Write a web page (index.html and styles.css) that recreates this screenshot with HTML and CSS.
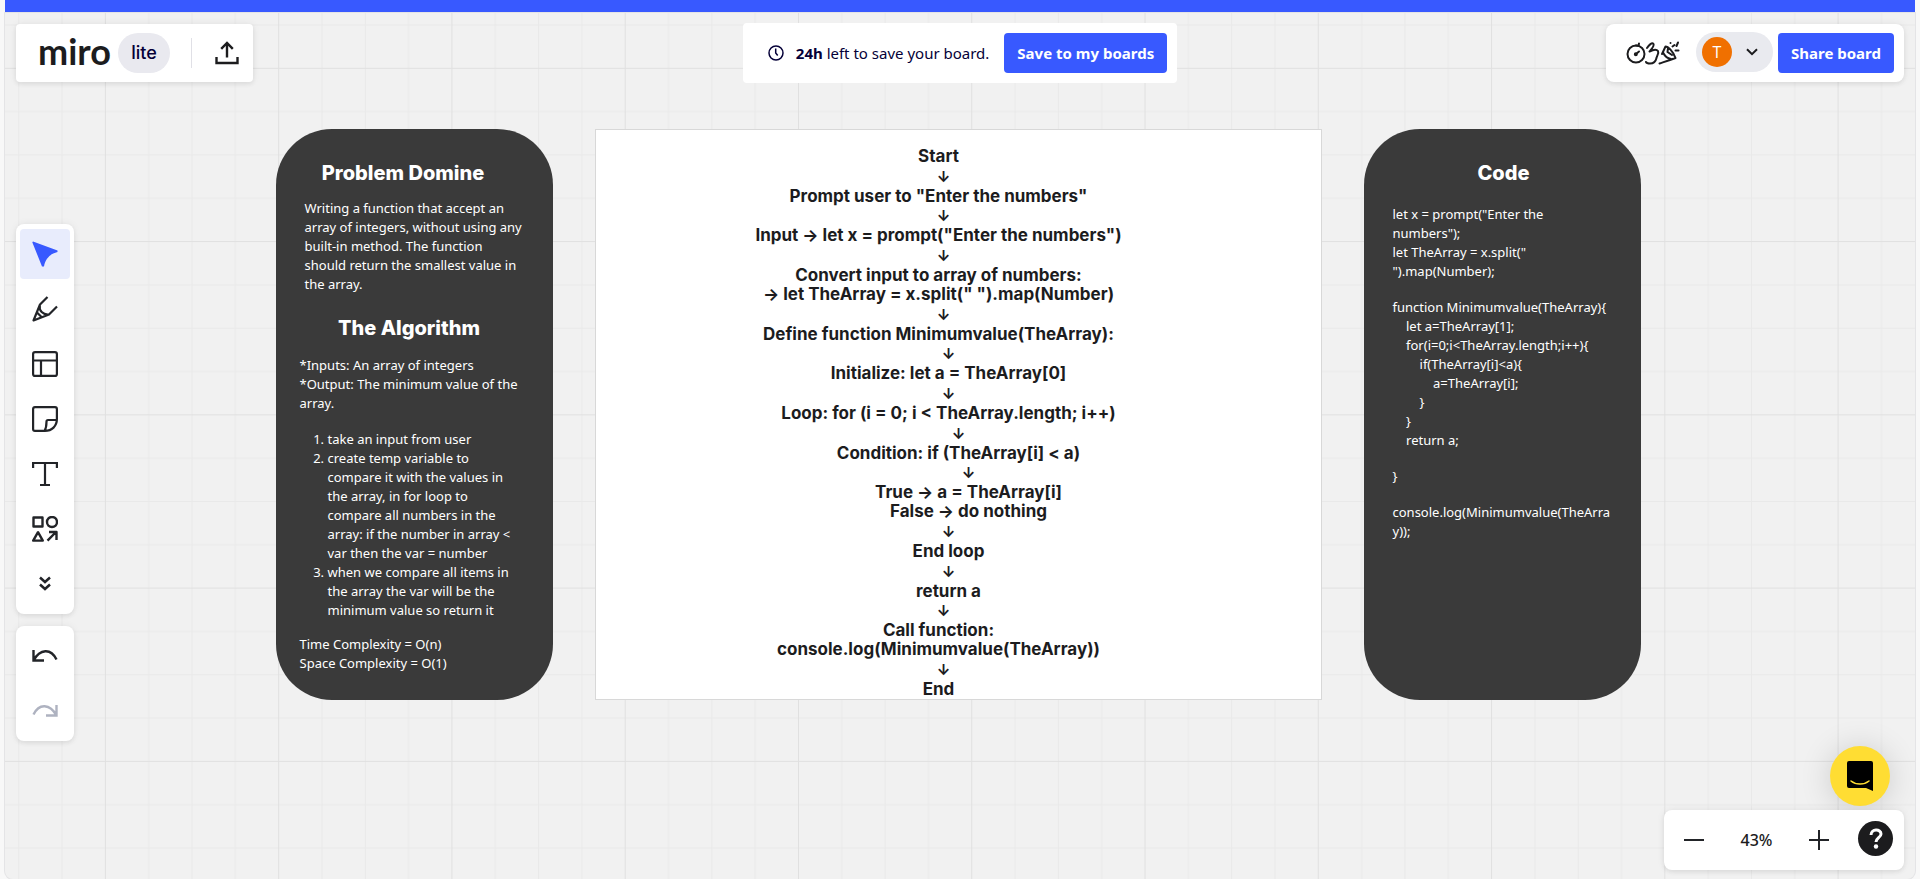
FILE: index.html
```html
<!DOCTYPE html>
<html lang="en">
<head>
<meta charset="utf-8">
<meta name="viewport" content="width=device-width, initial-scale=1">
<title>Miro lite board</title>
<link rel="stylesheet" href="styles.css">
</head>
<body>
<div class="frame">
  <div class="strip"></div>
  <div class="board">
    <svg class="grid" aria-hidden="true">
      <defs>
        <pattern id="cells" x="99.9" y="54.8" width="173.27" height="173.27" patternUnits="userSpaceOnUse">
          <path d="M43.8 0V173.3M87.1 0V173.3M130.4 0V173.3M0 43.8H173.3M0 87.1H173.3M0 130.4H173.3" stroke="#e9e9e9" stroke-width="1"/>
          <path d="M.5 0V173.3M0 .5H173.3" stroke="#e0e0e0" stroke-width="1"/>
        </pattern>
      </defs>
      <rect width="100%" height="100%" fill="url(#cells)"/>
    </svg>

    <main class="canvas">
      <section class="shape">
        <h2 class="shape-title title-problem">Problem Domine</h2>
        <p class="note note-problem">Writing a function that accept an<br>array of integers, without using any<br>built-in method. The function<br>should return the smallest value in<br>the array.</p>
        <h2 class="shape-title title-algorithm">The Algorithm</h2>
        <p class="note">*Inputs: An array of integers<br>*Output: The minimum value of the<br>array.</p>
        <ol class="note steps">
          <li>take an input from user</li>
          <li>create temp variable to<br>compare it with the values in<br>the array, in for loop to<br>compare all numbers in the<br>array: if the number in array &lt;<br>var then the var = number</li>
          <li>when we compare all items in<br>the array the var will be the<br>minimum value so return it</li>
        </ol>
        <p class="note">Time Complexity = O(n)<br>Space Complexity = O(1)</p>
      </section>

      <section class="sheet">
        <p>Start</p>
        <p class="arrow">↓</p>
        <p>Prompt user to "Enter the numbers"</p>
        <p class="arrow">↓</p>
        <p>Input → let x = prompt("Enter the numbers")</p>
        <p class="arrow">↓</p>
        <p>Convert input to array of numbers:<br>→ let TheArray = x.split(" ").map(Number)</p>
        <p class="arrow">↓</p>
        <p>Define function Minimumvalue(TheArray):</p>
        <p class="arrow in-1">↓</p>
        <p class="in-1">Initialize: let a = TheArray[0]</p>
        <p class="arrow in-1">↓</p>
        <p class="in-1">Loop: for (i = 0; i &lt; TheArray.length; i++)</p>
        <p class="arrow in-2">↓</p>
        <p class="in-2">Condition: if (TheArray[i] &lt; a)</p>
        <p class="arrow in-3">↓</p>
        <p class="in-3">True → a = TheArray[i]<br>False → do nothing</p>
        <p class="arrow in-1">↓</p>
        <p class="in-1">End loop</p>
        <p class="arrow in-1">↓</p>
        <p class="in-1">return a</p>
        <p class="arrow">↓</p>
        <p>Call function:<br>console.log(Minimumvalue(TheArray))</p>
        <p class="arrow">↓</p>
        <p>End</p>
      </section>

      <section class="shape shape-code">
        <h2 class="shape-title">Code</h2>
        <pre class="note code">let x = prompt("Enter the
numbers");
let TheArray = x.split("
").map(Number);</pre>
        <pre class="note code">function Minimumvalue(TheArray){
    let a=TheArray[1];
    for(i=0;i&lt;TheArray.length;i++){
        if(TheArray[i]&lt;a){
            a=TheArray[i];
        }
    }
    return a;</pre>
        <pre class="note code">}</pre>
        <pre class="note code">console.log(Minimumvalue(TheArra
y));</pre>
      </section>
    </main>

    <div class="overlay">
      <header class="topbar">
        <div class="panel brand">
          <span class="logo">miro</span>
          <span class="lite">lite</span>
          <span class="divider"></span>
          <button class="icon-btn export" aria-label="Export">
            <svg width="24" height="24" viewBox="0 0 24 24" fill="none" stroke="#1c1c1e" stroke-width="2.400"><path d="M12 16.500V2M6.200 7.800 12 2l5.800 5.800M1.500 16v6h21v-6"/></svg>
          </button>
        </div>

        <div class="panel saver">
          <svg width="16" height="16" viewBox="0 0 16 16" fill="none" stroke="#050038" stroke-width="1.500"><circle cx="8" cy="8" r="7"/><path d="M7.700 3.500V8l2 2.500"/></svg>
          <span class="saver-text"><b>24h</b> left to save your board.</span>
          <button class="primary">Save to my boards</button>
        </div>

        <div class="panel share">
          <button class="icon-btn fun" aria-label="Reactions and timer">
            <svg width="54" height="26" viewBox="0 0 54 26" fill="none" stroke="#1c1c1e" stroke-width="2" stroke-linecap="round" stroke-linejoin="round">
              <circle cx="10" cy="14" r="8.500"/><path d="M10 5.500 12.500 5.800 13 3.500M10 14l3-2.500"/><circle cx="9.800" cy="14.200" r="1" fill="#1c1c1e"/>
              <path d="M21 8C23 5 26 2 27.500 4c1 2-1.500 4.500-4 7.500 4-2 7-2.500 8.500-.5 1.200 2.500-1.200 4.500-1.500 7-.8 3.500-3.500 5.500-6.500 5.500-2 0-3.500-.5-4-1.500"/>
              <path d="M33.500 23.500C38 22 43 20.500 49.500 18 47 11 42 6.500 39.500 6.500L36 14M37 12.500c1.500 3 4.500 6 8 6.500M42 8l-.5 4 4.500 3"/>
              <path d="M44.500 3v.1M46.500 6.500 48.500 5M50.500 6 52 2.500M49.500 10.500h3"/>
            </svg>
          </button>
          <button class="account" aria-label="Account menu">
            <span class="avatar">T</span>
            <svg width="12" height="8" viewBox="0 0 12 8" fill="none" stroke="#1c1c1e" stroke-width="2"><path d="M1 1.200 6 6.200 11 1.200"/></svg>
          </button>
          <button class="primary">Share board</button>
        </div>
      </header>

      <div class="lower">
        <nav class="rail" aria-label="Tools">
          <div class="panel tools">
            <button class="tool active" aria-label="Select"><svg width="26" height="26" viewBox="0 0 26 26"><path d="M1 .500 25.500 9.500v1.500C19 12.500 13.500 17 12 25.500h-2L.300 1.200z" fill="#3859ff"/></svg></button>
            <button class="tool" aria-label="Pen"><svg width="26" height="26" viewBox="0 0 26 26" fill="none" stroke="#222428" stroke-width="2.200" stroke-linejoin="round"><path d="M15.500 1 8 8.500 1.500 24.500 17 18.500l8-8M7.800 9.500c-1 5 3 9.500 9 9M5 16.500l4.500 4.500"/></svg></button>
            <button class="tool" aria-label="Templates"><svg width="26" height="26" viewBox="0 0 26 26" fill="none" stroke="#222428" stroke-width="2.200"><rect x="1.100" y="1.100" width="23.800" height="23.800" rx="2"/><path d="M1 9.500h24M9 9.500V25"/></svg></button>
            <button class="tool" aria-label="Sticky note"><svg width="26" height="26" viewBox="0 0 26 26" fill="none" stroke="#222428" stroke-width="2.200" stroke-linejoin="round"><path d="M3 1.100h20a2 2 0 0 1 1.900 2v10c0 7-5 11.800-12 11.800H3a2 2 0 0 1-1.900-2V3A2 2 0 0 1 3 1.100zM24.800 14H16a1.500 1.500 0 0 0-1.500 1.500c0 4.500-.5 7-2 9.500"/></svg></button>
            <button class="tool" aria-label="Text"><svg width="26" height="26" viewBox="0 0 26 26" fill="none" stroke="#222428" stroke-width="2.200"><path d="M1.100 7V2h23.800v5M13 2v22M8 24h10"/></svg></button>
            <button class="tool" aria-label="Shapes"><svg width="26" height="26" viewBox="0 0 26 26" fill="none" stroke="#222428" stroke-width="2.400" stroke-linejoin="round"><rect x="1.500" y="1.500" width="9" height="9"/><circle cx="20" cy="6" r="5"/><path d="M6 16.200 1.200 24.600h9.600zM15.500 24.600 24 16M17 16h7.500v8"/></svg></button>
            <button class="tool" aria-label="More tools"><svg width="12" height="16" viewBox="0 0 12 16" fill="none" stroke="#222428" stroke-width="2.500"><path d="M1 1.500 6 6l5-4.500M1 8.500 6 13l5-4.500"/></svg></button>
          </div>
          <div class="panel tools">
            <button class="tool" aria-label="Undo"><svg width="26" height="14" viewBox="0 0 26 14" fill="none" stroke="#222428" stroke-width="2.400"><path d="M1.500 1v10.500H12M1.500 11.500C8-.5 19-1 24.500 10.500"/></svg></button>
            <button class="tool" aria-label="Redo" disabled><svg width="26" height="14" viewBox="0 0 26 14" fill="none" stroke="#aeb2c0" stroke-width="2.400"><path d="M24.500 1v10.500H14M24.500 11.500C18-.5 7-1 1.500 10.500"/></svg></button>
          </div>
        </nav>

        <div class="corner">
          <button class="chat" aria-label="Open chat">
            <svg width="28" height="32" viewBox="0 0 28 32"><path d="M3 1h22a2 2 0 0 1 2 2v28l-7-3H3a2 2 0 0 1-2-2V3a2 2 0 0 1 2-2z" fill="#000"/><path d="M5 21c5 4 13 4 18 0" fill="none" stroke="#ffdd33" stroke-width="1.500" stroke-linecap="round"/></svg>
          </button>
          <div class="panel zoom">
            <button class="icon-btn" aria-label="Zoom out"><svg width="20" height="20" viewBox="0 0 20 20" stroke="#222428" stroke-width="2"><path d="M0 10h20"/></svg></button>
            <button class="level">43%</button>
            <button class="icon-btn" aria-label="Zoom in"><svg width="20" height="20" viewBox="0 0 20 20" stroke="#222428" stroke-width="2"><path d="M0 10h20M10 0v20"/></svg></button>
            <button class="help" aria-label="Help"><svg width="14" height="22" viewBox="0 0 14 22" fill="none" stroke="#fff" stroke-width="3"><path d="M2 7C2 .500 12 .500 12 6c0 3.500-5 4-5 8"/><circle cx="7" cy="18.500" r="2.200" fill="#fff" stroke="none"/></svg></button>
          </div>
        </div>
      </div>
    </div>
  </div>
</div>
</body>
</html>
```
FILE: styles.css
```css
* { box-sizing: border-box; }

body {
  margin: 0;
  background: #f8f8f8;
  color: #1c1c1e;
  font-family: "Noto Sans", sans-serif;
}

h2, p, ol, pre { margin: 0; }

button {
  border: 0;
  padding: 0;
  background: none;
  color: inherit;
  font: inherit;
  cursor: pointer;
}

svg { display: block; flex: none; }

.frame {
  display: flex;
  flex-direction: column;
  min-height: 100vh;
  padding: 0 5px;
}

.strip { height: 13px; background: #3859ff; }

.board {
  flex: 1;
  display: grid;
  overflow: hidden;
  background: #f1f1f1;
  border-radius: 0 0 8px 8px;
  box-shadow: 0 0 0 1px #e4e4e6;
}

.grid, .canvas, .overlay { grid-area: 1 / 1; }

.grid { width: 100%; height: 100%; }

/* Board content */

.canvas {
  display: flex;
  justify-content: center;
  align-items: stretch;
  align-self: start;
  gap: 42px;
  padding: 116px 4px 0 0;
}

.shape {
  flex: 0 0 277px;
  padding: 33px 16px 27px 24px;
  border-radius: 56px;
  background: #3a3a3a;
  color: #fff;
  white-space: nowrap;
}

.shape-title {
  font: 800 20px/22px Inter, sans-serif;
  text-align: center;
}

.title-problem { padding-right: 30px; }
.title-algorithm { padding: 23px 18px 17px 0; }

.note {
  font-family: "Noto Sans", sans-serif;
  font-size: 13px;
  line-height: 19px;
  color: #fff;
}

.note-problem { padding: 15px 0 0 5px; }

.steps { margin: 17px 0 15px; padding-left: 28px; }

.shape-code { padding-left: 29px; }
.shape-code .shape-title { padding-right: 10px; margin-bottom: 21px; }
.code + .code { margin-top: 17px; }

.sheet {
  flex: 0 0 727px;
  display: flex;
  flex-direction: column;
  justify-content: space-between;
  padding: 17px 39px 0 0;
  border: 1px solid #d8d8d8;
  background: #fff;
  font: 700 17px/19px Inter, sans-serif;
  text-align: center;
}

.sheet .arrow { padding-left: 10px; font-size: 15px; }
.sheet .in-1 { padding-left: 20px; }
.sheet .in-2 { padding-left: 40px; }
.sheet .in-3 { padding-left: 60px; }

/* Interface panels */

.overlay {
  z-index: 1;
  display: flex;
  flex-direction: column;
  padding: 10px 11px 9px;
  pointer-events: none;
}

.panel {
  display: flex;
  align-items: center;
  background: #fff;
  border-radius: 8px;
  box-shadow: 0 2px 4px rgba(34, 36, 40, 0.08), 0 0 8px rgba(34, 36, 40, 0.06);
  pointer-events: auto;
}

.topbar {
  display: grid;
  grid-template-columns: 1fr auto 1fr;
  align-items: center;
}

.brand {
  justify-self: start;
  height: 58px;
  padding: 0 14px 0 22px;
  border-radius: 4px;
}

.logo {
  width: 80px;
  padding-bottom: 4px;
  font: 700 36px/40px Lato, sans-serif;
}

.lite {
  width: 52px;
  border-radius: 20px;
  background: #e9e9ef;
  color: #050038;
  font: 500 18px/40px Inter, sans-serif;
  text-align: center;
}

.divider {
  width: 1px;
  height: 30px;
  margin: 0 23px 0 21px;
  background: #e0e0e6;
}

.saver {
  height: 60px;
  gap: 12px;
  padding: 0 10px 0 25px;
  border-radius: 4px;
  box-shadow: none;
}

.saver-text { margin-right: 3px; color: #050038; font-size: 15px; }

.primary {
  height: 40px;
  padding: 0 13px;
  border-radius: 4px;
  background: #3859ff;
  color: #fff;
  font-size: 15px;
  font-weight: 700;
}

.share {
  justify-self: end;
  height: 58px;
  padding: 0 10px 0 20px;
}

.account {
  display: flex;
  align-items: center;
  gap: 14px;
  height: 40px;
  margin: 0 5px 3px 16px;
  padding: 0 15px 0 6px;
  border-radius: 20px;
  background: #e9eaef;
}

.avatar {
  width: 30px;
  border-radius: 50%;
  background: #f07000;
  color: #fff;
  font: 400 16px/30px "Open Sans", sans-serif;
  text-align: center;
}

.lower {
  flex: 1;
  display: flex;
  justify-content: space-between;
}

.rail {
  display: flex;
  flex-direction: column;
  gap: 12px;
  padding-top: 141px;
}

.tools {
  flex-direction: column;
  gap: 5px;
  width: 58px;
  padding: 5px 4px;
}

.tool {
  display: flex;
  align-items: center;
  justify-content: center;
  width: 50px;
  height: 50px;
  border-radius: 4px;
}

.active { background: #e8ecfc; }

.corner {
  display: flex;
  flex-direction: column;
  align-items: flex-end;
  align-self: flex-end;
  gap: 4px;
}

.chat {
  display: flex;
  align-items: center;
  justify-content: center;
  width: 60px;
  height: 60px;
  margin-right: 14px;
  border-radius: 50%;
  background: #ffdd33;
  box-shadow: 0 2px 32px rgba(0, 0, 0, 0.16);
  pointer-events: auto;
}

.zoom {
  height: 60px;
  padding: 0 11px 0 20px;
}

.level { width: 105px; font-size: 16px; font-weight: 500; }

.help {
  display: flex;
  align-items: center;
  justify-content: center;
  width: 35px;
  height: 35px;
  margin: 0 0 3px 29px;
  border-radius: 50%;
  background: #1c1c1e;
}
```
